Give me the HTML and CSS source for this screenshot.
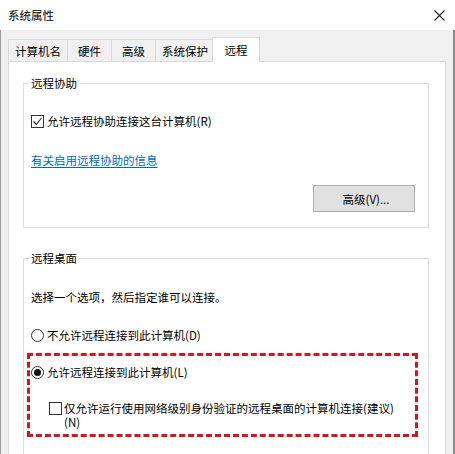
FILE: index.html
```html
<!DOCTYPE html>
<html lang="zh-CN">
<head>
<meta charset="utf-8">
<title>系统属性</title>
<link rel="stylesheet" href="styles.css">
</head>
<body>
<div class="window">
  <div class="titlebar">
    <span class="title">系统属性</span>
    <svg class="close" width="11" height="11" viewBox="0 0 11 11"><path d="M0.5 0.5 L10.5 10.5 M10.5 0.5 L0.5 10.5" stroke="#222" stroke-width="1.1" fill="none"/></svg>
  </div>
  <div class="content">
    <div class="tabs">
      <div class="tab">计算机名</div>
      <div class="tab">硬件</div>
      <div class="tab">高级</div>
      <div class="tab">系统保护</div>
      <div class="tab active">远程</div>
    </div>
    <div class="panel">
      <fieldset class="group g1">
        <legend>远程协助</legend>
        <label class="opt first">
          <span class="cb"><svg width="11" height="11" viewBox="0 0 11 11"><path d="M1.5 5.5 L4.3 8.5 L9.5 2" stroke="#222" stroke-width="1.1" fill="none"/></svg></span>
          <span>允许远程协助连接这台计算机(R)</span>
        </label>
        <a class="link" href="#">有关启用远程协助的信息</a>
        <div class="btnrow"><button class="btn">高级(V)...</button></div>
      </fieldset>
      <fieldset class="group g2">
        <legend>远程桌面</legend>
        <p class="desc">选择一个选项，然后指定谁可以连接。</p>
        <label class="opt deny"><span class="radio"></span><span>不允许远程连接到此计算机(D)</span></label>
        <div class="highlight">
          <label class="opt"><span class="radio on"></span><span>允许远程连接到此计算机(L)</span></label>
          <label class="opt sub"><span class="cb"></span><span class="wraptext">仅允许运行使用网络级别身份验证的远程桌面的计算机连接(建议)(N)</span></label>
        </div>
      </fieldset>
    </div>
  </div>
</div>
</body>
</html>
```
FILE: styles.css
```css
html, body {
  margin: 0;
  padding: 0;
}
body {
  width: 455px;
  height: 454px;
  overflow: hidden;
  font-family: "Microsoft YaHei", "Noto Sans CJK SC", "Noto Sans", sans-serif;
  font-size: 11.5px;
  line-height: 16px;
  color: #000;
  background: #f0f0f0;
}
.window {
  width: 455px;
  height: 454px;
  display: flex;
  flex-direction: column;
  overflow: hidden;
}
.titlebar {
  height: 30px;
  flex: none;
  background: #fff;
  display: flex;
  align-items: center;
  justify-content: space-between;
  padding: 0 10px 0 8px;
  box-sizing: border-box;
}
.title {
  font-size: 11.5px;
  line-height: 16px;
}
.close { display: block; }
.content {
  flex: 1;
  background: #f0f0f0;
  border-left: 1px solid #9a9a9a;
  border-right: 2px solid #8a8a8a;
  padding: 7px 7px 0 7px;
  display: flex;
  flex-direction: column;
  min-height: 0;
}
.tabs {
  display: flex;
  align-items: flex-end;
  height: 24px;
  flex: none;
}
.tab {
  box-sizing: border-box;
  height: 22px;
  padding: 0 6px;
  min-width: 45px;
  border: 1px solid #d9d9d9;
  border-bottom: none;
  margin-right: -1px;
  display: flex;
  align-items: center;
  justify-content: center;
  background: #f0f0f0;
  white-space: nowrap;
}
.tab.active {
  position: relative;
  z-index: 1;
  height: 25px;
  margin: 0 -2px -1px -2px;
  background: #fff;
  min-width: 48px;
  padding-bottom: 1px;
}
.panel {
  flex: 1;
  background: #fff;
  border: 1px solid #d9d9d9;
  border-bottom: none;
  padding: 13px 0 0 14px;
  min-height: 0;
  overflow: hidden;
}
.group {
  width: 406px;
  box-sizing: border-box;
  margin: 0;
  min-width: 0;
  border: 1px solid #dcdcdc;
  padding: 0 0 15px 7px;
}
.group legend {
  padding: 0 2px;
  margin-left: -2px;
  line-height: 16px;
}
.g2 { margin-top: 22px; padding-bottom: 40px; }
.opt {
  display: flex;
  align-items: center;
  height: 16px;
  white-space: nowrap;
}
.opt.first { margin-top: 22px; }
.cb {
  width: 13px;
  height: 13px;
  box-sizing: border-box;
  border: 1px solid #333;
  background: #fff;
  margin-right: 3px;
  flex: none;
  display: flex;
  align-items: center;
  justify-content: center;
}
.cb svg { display: block; }
.radio {
  width: 13px;
  height: 13px;
  box-sizing: border-box;
  border: 1px solid #333;
  border-radius: 50%;
  background: #fff;
  margin-right: 3px;
  flex: none;
  display: flex;
  align-items: center;
  justify-content: center;
}
.radio.on::after {
  content: "";
  width: 7px;
  height: 7px;
  border-radius: 50%;
  background: #111;
}
.link {
  display: block;
  width: max-content;
  margin-top: 23px;
  color: #0066cc;
  text-decoration: underline;
  text-underline-offset: 2px;
}
.btnrow {
  display: flex;
  justify-content: flex-end;
  margin-top: 17px;
  padding-right: 13px;
}
.btn {
  width: 102px;
  height: 27px;
  background: #e1e1e1;
  border: 1px solid #adadad;
  font: inherit;
  color: #000;
  padding: 0 0 0 4px;
}
.desc {
  margin: 23px 0 0 0;
}
.deny { margin-top: 22px; }
.highlight {
  margin: 10px 0 0 -4px;
  width: 391px;
  box-sizing: border-box;
  border: 3px dashed #d8141e;
  padding: 8px 0 5px 1px;
}
.opt.sub {
  height: auto;
  align-items: flex-start;
  margin: 21px 0 0 18px;
  line-height: 14px;
  white-space: normal;
}
.opt.sub .cb {
  margin-top: 1px;
  margin-right: 2px;
}
.wraptext {
  width: 340px;
}
```
